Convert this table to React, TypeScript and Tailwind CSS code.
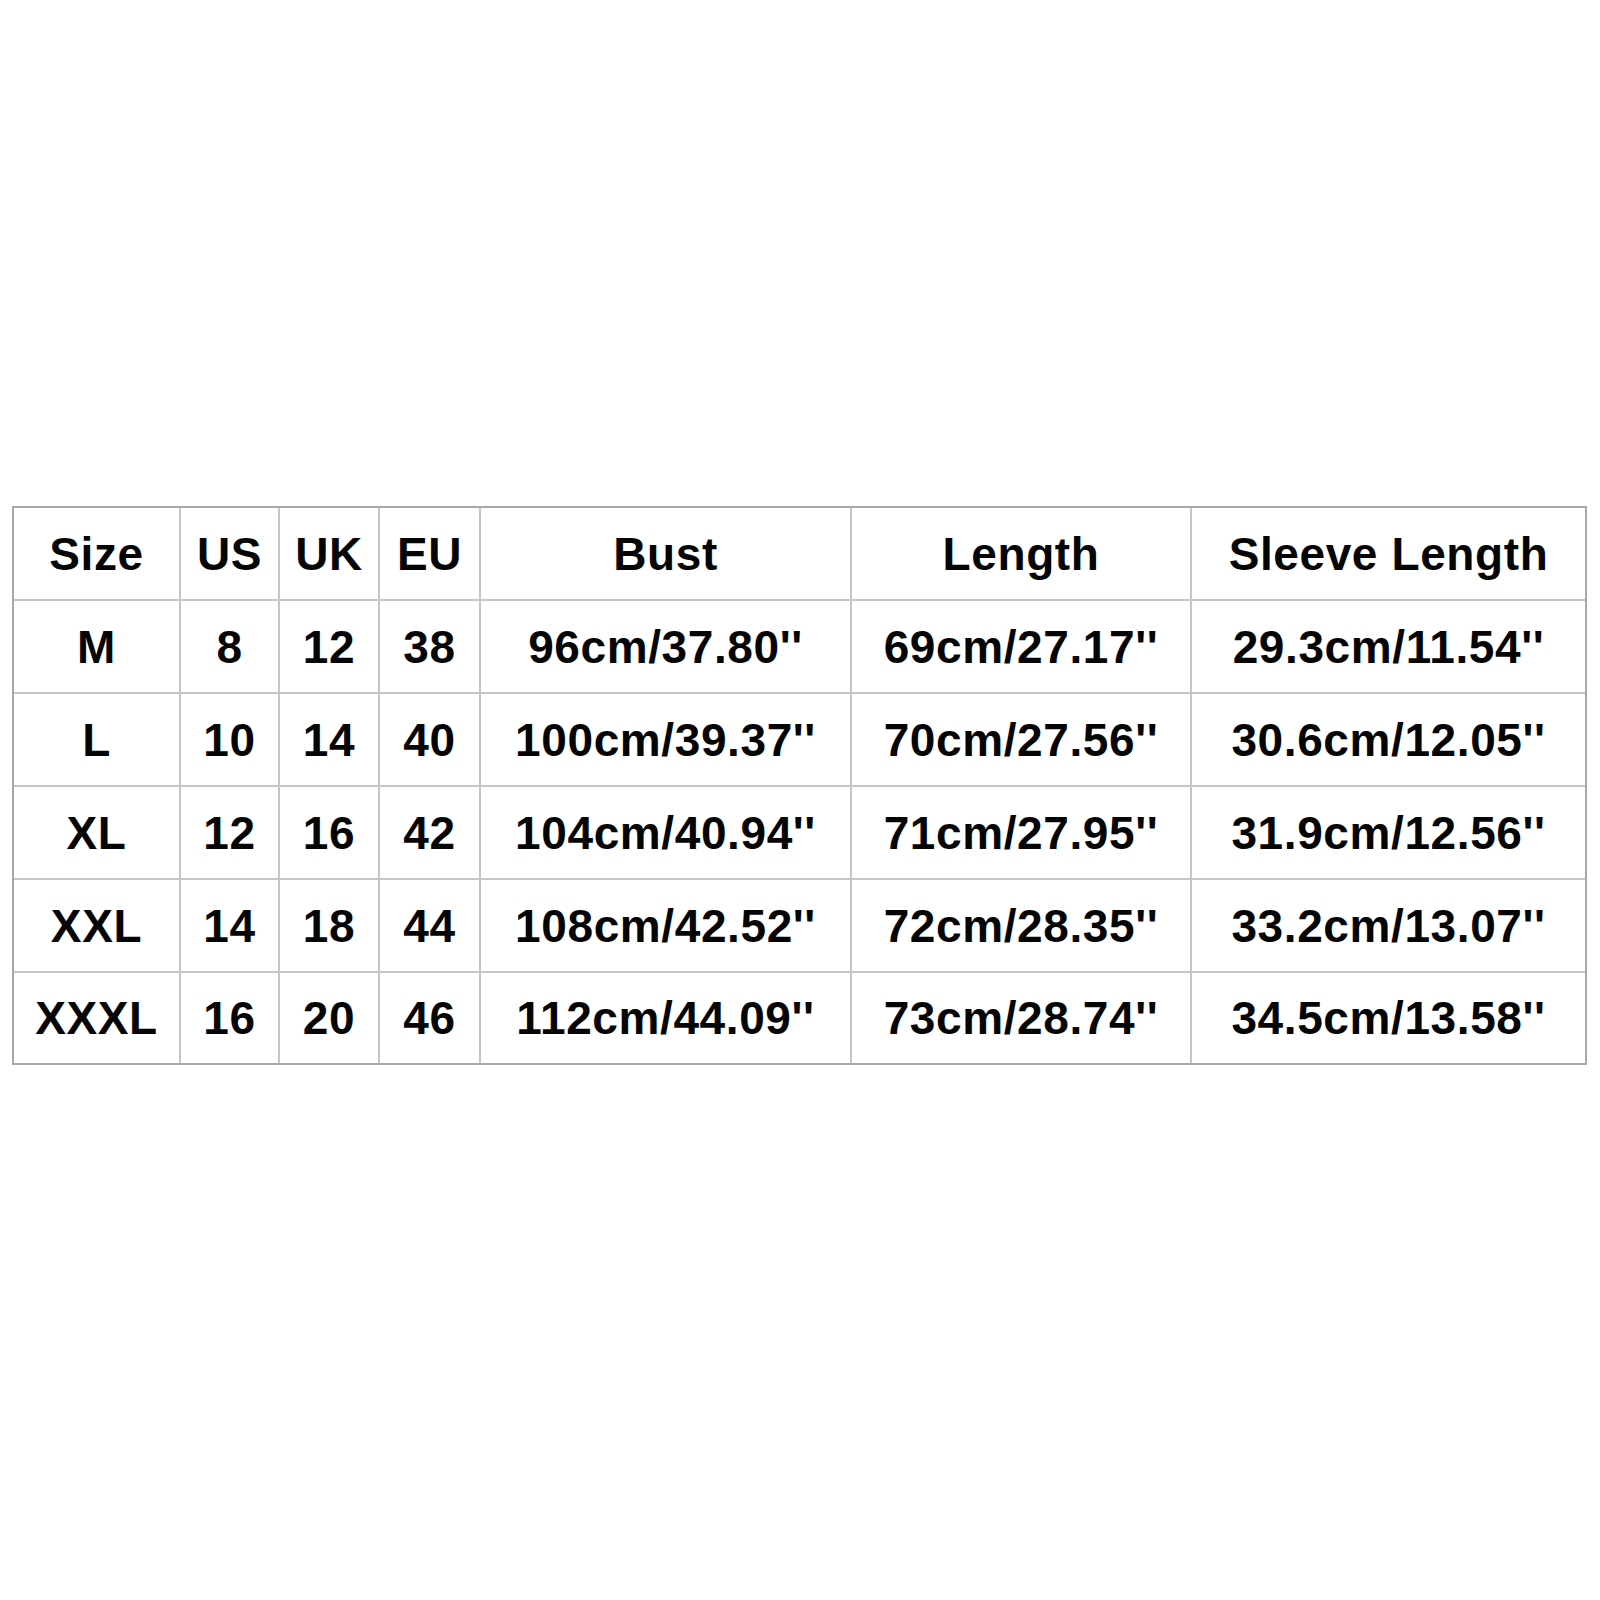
const headers = ["Size", "US", "UK", "EU", "Bust", "Length", "Sleeve Length"];

const rows: string[][] = [
  ["M", "8", "12", "38", "96cm/37.80''", "69cm/27.17''", "29.3cm/11.54''"],
  ["L", "10", "14", "40", "100cm/39.37''", "70cm/27.56''", "30.6cm/12.05''"],
  ["XL", "12", "16", "42", "104cm/40.94''", "71cm/27.95''", "31.9cm/12.56''"],
  ["XXL", "14", "18", "44", "108cm/42.52''", "72cm/28.35''", "33.2cm/13.07''"],
  ["XXXL", "16", "20", "46", "112cm/44.09''", "73cm/28.74''", "34.5cm/13.58''"],
];

function Cell({ children }: { children: React.ReactNode }) {
  return (
    <div className="flex items-center justify-center bg-white whitespace-nowrap">
      {children}
    </div>
  );
}

export default function App() {
  return (
    <div className="min-h-[1600px] w-[1600px] bg-white pl-[12px] pt-[506px] font-['Liberation_Sans',Arial,sans-serif] text-[46px] font-bold leading-none tracking-[0.6px] text-[#050505]">
      <div className="grid w-fit grid-cols-[165px_97px_98px_99px_369px_338px_393px] grid-rows-[91px_91px_91px_91px_91px_90px] gap-[2px] border-2 border-[#a8a8a8] bg-[#c6c6c6]">
        {headers.map((h) => (
          <Cell key={h}>{h}</Cell>
        ))}
        {rows.map((r) =>
          r.map((v, i) => <Cell key={r[0] + i}>{v}</Cell>),
        )}
      </div>
    </div>
  );
}
